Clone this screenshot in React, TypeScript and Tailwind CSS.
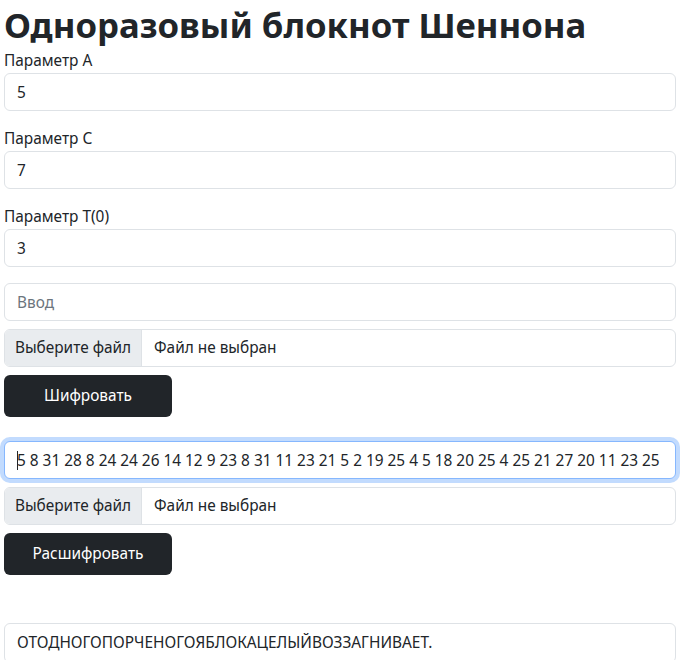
import React from "react";

const font = { fontFamily: '"Noto Sans", "Open Sans", sans-serif' };

function Field({ label, value }: { label: string; value: string }) {
  return (
    <div className="mb-4">
      <div className="text-[15.4px] leading-6 text-[#212529]">{label}</div>
      <input
        readOnly
        value={value}
        className="block h-[38px] w-full rounded-[6px] border border-[#dee2e6] bg-white px-3 text-[15.4px] text-[#212529] outline-none"
      />
    </div>
  );
}

function FileInput() {
  return (
    <div className="flex h-[38px] w-full overflow-hidden rounded-[6px] border border-[#dee2e6] text-[15.4px] text-[#212529]">
      <div className="flex w-[137px] shrink-0 items-center justify-center whitespace-nowrap border-r border-[#dee2e6] bg-[#e9ecef]">
        Выберите файл
      </div>
      <div className="flex items-center px-3">Файл не выбран</div>
    </div>
  );
}

export default function App() {
  return (
    <div className="min-h-[660px] bg-white px-1" style={font}>
      <h1 className="m-0 h-[49px] text-[34.7px] font-bold leading-[49px] text-[#212529]">Одноразовый блокнот Шеннона</h1>
      <Field label="Параметр А" value="5" />
      <Field label="Параметр С" value="7" />
      <Field label="Параметр T(0)" value="3" />
      <input
        readOnly
        placeholder="Ввод"
        className="block h-[38px] w-full rounded-[6px] border border-[#dee2e6] bg-white px-3 text-[15.4px] text-[#212529] outline-none placeholder:text-[#6c757d]"
      />
      <div className="mt-2">
        <FileInput />
      </div>
      <button className="mt-2 flex h-[42px] w-[168px] items-center justify-center rounded-[6px] bg-[#212529] text-[15.4px] text-white">
        Шифровать
      </button>
      <div className="relative mt-6">
        <input
          readOnly
          defaultValue="5 8 31 28 8 24 24 26 14 12 9 23 8 31 11 23 21 5 2 19 25 4 5 18 20 25 4 25 21 27 20 11 23 25"
          className="block h-[38px] w-full rounded-[6px] border border-[#86b7fe] bg-white px-3 text-[15.4px] text-[#212529] shadow-[0_0_0_4px_rgba(13,110,253,0.25)] outline-none"
        />
        <span className="absolute left-[13px] top-[10px] h-[19px] w-px bg-[#212529]" />
      </div>
      <div className="mt-2">
        <FileInput />
      </div>
      <button className="mt-2 flex h-[42px] w-[168px] items-center justify-center rounded-[6px] bg-[#212529] text-[15.4px] text-white">
        Расшифровать
      </button>
      <div className="mt-12 rounded-[6px] border border-[#dee2e6] px-3 py-[7px] text-[15.4px] leading-6 text-[#212529]">
        ОТОДНОГОПОРЧЕНОГОЯБЛОКАЦЕЛЫЙВОЗЗАГНИВАЕТ.
      </div>
    </div>
  );
}
